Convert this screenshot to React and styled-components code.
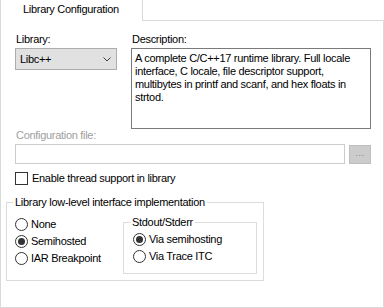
import React from "react";
import styled, { createGlobalStyle } from "styled-components";

const GlobalStyle = createGlobalStyle`
   html, body {
      margin: 0;
      padding: 0;
      background: #ffffff;
   }
   body {
      font-family: "Liberation Sans", Arial, sans-serif;
      font-size: 11px;
      line-height: 13px;
      letter-spacing: -0.3px;
      color: #000000;
   }
`;

const Window = styled.div`
   width: 384px;
   height: 308px;
   display: flex;
   flex-direction: column;
   background: #ffffff;
`;

const TabStrip = styled.div`
   display: flex;
   height: 21px;
`;

const Tab = styled.div`
   width: 143px;
   box-sizing: border-box;
   border-left: 1px solid #d9d9d9;
   border-right: 1px solid #d9d9d9;
   padding: 3px 0 0 22px;
`;

const TabFiller = styled.div`
   flex: 1;
   border-bottom: 1px solid #d9d9d9;
`;

const Panel = styled.div`
   flex: 1;
   box-sizing: border-box;
   border: 1px solid #d9d9d9;
   border-top: none;
   padding: 12px 12px 0 14px;
   display: flex;
   flex-direction: column;
`;

const TopRow = styled.div`
   display: grid;
   grid-template-columns: 102px 240px;
   column-gap: 14px;
`;

const Field = styled.div`
   display: flex;
   flex-direction: column;
`;

const Label = styled.div`
   padding-left: 1px;
   margin-bottom: 2px;
   color: ${(p) => (p.disabled ? "#a0a0a0" : "#000000")};
`;

const Select = styled.div`
   height: 22px;
   box-sizing: border-box;
   border: 1px solid #adadad;
   background: #e1e1e1;
   display: flex;
   align-items: center;
   justify-content: space-between;
   padding: 0 4px 0 4px;

   svg {
      width: 8px;
      height: 5px;
      margin-right: 1px;
   }
`;

const Description = styled.div`
   height: 81px;
   box-sizing: border-box;
   border: 1px solid #7a7a7a;
   padding: 3px 3px;

   span {
      display: block;
      white-space: nowrap;
   }
`;

const FileRow = styled.div`
   display: flex;
   align-items: flex-start;
   gap: 4px;
`;

const FileInput = styled.div`
   width: 330px;
   height: 20px;
   box-sizing: border-box;
   border: 1px solid #cccccc;
   background: #ffffff;
`;

const BrowseButton = styled.div`
   width: 22px;
   height: 19px;
   margin-top: 1px;
   box-sizing: border-box;
   border: 1px solid #bfbfbf;
   background: #cccccc;
   color: #838383;
   display: flex;
   align-items: center;
   justify-content: center;
   font-size: 9px;
   letter-spacing: 0.5px;
   padding-bottom: 2px;
`;

const CheckRow = styled.div`
   display: flex;
   align-items: center;
   gap: 4px;
   height: 15px;
   margin-top: 7px;
`;

const CheckBox = styled.span`
   width: 13px;
   height: 13px;
   box-sizing: border-box;
   border: 1px solid #333333;
   background: #ffffff;
`;

const Group = styled.fieldset`
   margin: ${(p) => p.$outer ? "10px 0 0 -9px" : "0"};
   padding: 0;
   width: ${(p) => p.$width}px;
   height: ${(p) => p.$height}px;
   box-sizing: border-box;
   border: 1px solid #dcdcdc;
   min-inline-size: 0;
`;

const Legend = styled.legend`
   margin-left: 6px;
   padding: 0 2px;
   line-height: 13px;
`;

const GroupBody = styled.div`
   display: flex;
   align-items: flex-start;
   padding: ${(p) => p.$padding};
`;

const RadioColumn = styled.div`
   display: flex;
   flex-direction: column;
   width: ${(p) => (p.$width ? `${p.$width}px` : "auto")};
`;

const RadioRow = styled.div`
   display: flex;
   align-items: center;
   gap: 3px;
   height: 17px;
`;

const RadioCircle = styled.span`
   position: relative;
   width: 13px;
   height: 13px;
   box-sizing: border-box;
   border: 1px solid #333333;
   border-radius: 50%;
   background: #ffffff;

   &::after {
      content: "";
      display: ${(p) => (p.$checked ? "block" : "none")};
      position: absolute;
      left: 2px;
      top: 2px;
      width: 7px;
      height: 7px;
      border-radius: 50%;
      background: #333333;
   }
`;

const Radio = ({ checked, children }) => (
   <RadioRow>
      <RadioCircle $checked={checked} />
      <span>{children}</span>
   </RadioRow>
);

const Chevron = () => (
   <svg viewBox="0 0 8 5">
      <path d="M0.5 0.5 L4 4 L7.5 0.5" fill="none" stroke="#404040" strokeWidth="1" />
   </svg>
);

const App = () => {
   return (
      <Window>
         <GlobalStyle />
         <TabStrip>
            <Tab>Library Configuration</Tab>
            <TabFiller />
         </TabStrip>
         <Panel>
            <TopRow>
               <Field>
                  <Label>Library:</Label>
                  <Select>
                     <span>Libc++</span>
                     <Chevron />
                  </Select>
               </Field>
               <Field>
                  <Label>Description:</Label>
                  <Description>
                     <span>A complete C/C++17 runtime library. Full locale</span>
                     <span>interface, C locale, file descriptor support,</span>
                     <span>multibytes in printf and scanf, and hex floats in</span>
                     <span>strtod.</span>
                  </Description>
               </Field>
            </TopRow>
            <Label disabled>Configuration file:</Label>
            <FileRow>
               <FileInput />
               <BrowseButton>...</BrowseButton>
            </FileRow>
            <CheckRow>
               <CheckBox />
               <span>Enable thread support in library</span>
            </CheckRow>
            <Group $outer $width={258} $height={85}>
               <Legend>Library low-level interface implementation</Legend>
               <GroupBody $padding="7px 0 0 8px">
                  <RadioColumn $width={108}>
                     <Radio>None</Radio>
                     <Radio checked>Semihosted</Radio>
                     <Radio>IAR Breakpoint</Radio>
                  </RadioColumn>
                  <Group $width={134} $height={58}>
                     <Legend>Stdout/Stderr</Legend>
                     <GroupBody $padding="2px 0 0 9px">
                        <RadioColumn>
                           <Radio checked>Via semihosting</Radio>
                           <Radio>Via Trace ITC</Radio>
                        </RadioColumn>
                     </GroupBody>
                  </Group>
               </GroupBody>
            </Group>
         </Panel>
      </Window>
   );
};

export default App;
